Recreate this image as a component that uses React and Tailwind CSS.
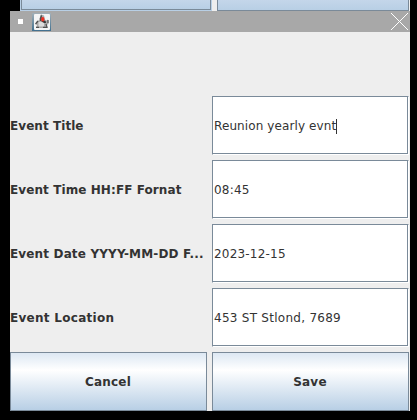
const textBase = "font-['DejaVu_Sans',sans-serif] text-[12px] leading-[14px] text-[#333333] whitespace-pre";

const fields = [
  { label: "Event Title", value: "Reunion yearly evnt", caret: true, labelTrack: "tracking-[0.06px]", valueTrack: "tracking-[0.1px]" },
  { label: "Event Time HH:FF Fornat", value: "08:45", labelTrack: "tracking-[0.09px]", valueTrack: "tracking-[0.2px]" },
  { label: "Event Date YYYY-MM-DD F...", value: "2023-12-15", labelTrack: "tracking-[0.15px]", valueTrack: "tracking-[0.2px]" },
  { label: "Event Location", value: "453 ST Stlond, 7689", labelTrack: "tracking-[0.28px]", valueTrack: "tracking-[0.27px]" },
];

function AppIcon() {
  return (
    <svg width="19" height="18" viewBox="0 0 19 18">
      <defs>
        <linearGradient id="frame" x1="0" y1="0" x2="0" y2="1">
          <stop offset="0" stopColor="#a3b0b8" />
          <stop offset="1" stopColor="#41708f" />
        </linearGradient>
      </defs>
      <rect width="19" height="18" fill="url(#frame)" />
      <rect x="2" y="1" width="16" height="16" rx="1" fill="#f4f5f6" />
      <path d="M3.5 11 L5 8 L8 7 L9 1.5 L12 2.5 L13.5 8 L16 6.5 L16.5 11 L14.5 12 L16 15 L4 15 L5 12Z" fill="#a8a8a8" />
      <path d="M7.5 6 L9 1.5 L10 3 L9.5 8 L8 8Z" fill="#505050" />
      <path d="M9 8 L13.5 7.5 L14 10 L10 10Z" fill="#383838" />
      <path d="M6.5 9 L9.5 8.5 L12 10 L12 13.5 L6.5 13.5Z" fill="#dcdcdc" />
      <path d="M3.5 11 L6 8 M16 7 L16 10 M14 11 L15 14 M4 14.3 H7 M11 14.3 H15.5" stroke="#505050" strokeWidth="1.2" fill="none" />
      <ellipse cx="10.8" cy="6.2" rx="1.6" ry="2.3" fill="#ee3022" />
    </svg>
  );
}

function TitleBar() {
  return (
    <div className="flex h-[21px] bg-[#a8a8a8]">
      <div className="mt-2 ml-2 size-[5px] bg-white" />
      <div className="mt-0.5 ml-[9px]">
        <AppIcon />
      </div>
      <svg className="mt-0.5 mr-0.5 ml-auto" width="17" height="17" viewBox="0 0 17 17" shapeRendering="crispEdges">
        <path d="M0 0 L17 17 M17 0 L0 17" stroke="#fff" strokeWidth="1" />
      </svg>
    </div>
  );
}

function Field({ value, caret, track }) {
  return (
    <div className="flex bg-white border border-[#7a8a99] border-r-white border-b-white">
      <div className={`flex flex-1 items-center border-r border-b border-[#7a8a99] pt-0.5 pl-px ${textBase} ${track}`}>
        {value}
        {caret && <span className="h-[15px] w-px bg-[#333333]" />}
      </div>
    </div>
  );
}

function Button({ children }) {
  return (
    <button
      className={`border border-[#7a8a99] bg-linear-to-b from-[#dde8f3] via-white via-30% to-[#b8cfe5] pr-px font-bold tracking-[0.2px] ${textBase}`}
    >
      {children}
    </button>
  );
}

export default function App() {
  return (
    <div className="h-[420px] w-[417px] overflow-hidden bg-black">
      <div className="ml-5 flex h-[11px] w-[390px] bg-[#eeeeee]">
        <div className="w-[192px] border-x border-b border-[#b8cfe5] bg-[#7a8a99]">
          <div className="h-[10px] border-x border-b border-[#7a8a99] bg-linear-to-b from-[#c4d6ea] to-[#b8cfe5]" />
        </div>
        <div className="ml-[5px] w-[192px] border-x border-b border-[#7a8a99] bg-linear-to-b from-[#c4d6ea] to-[#b8cfe5]" />
      </div>
      <div className="ml-2.5 w-[400px] bg-[#eeeeee]">
        <TitleBar />
        <div className="grid h-[379px] grid-cols-[197px_197px] grid-rows-[repeat(6,59px)] gap-[5px]">
          <div className="col-span-2" />
          {fields.map((f) => (
            <div key={f.label} className="contents">
              <div className={`flex items-center font-bold ${textBase} ${f.labelTrack}`}>{f.label}</div>
              <Field value={f.value} caret={f.caret} track={f.valueTrack} />
            </div>
          ))}
          <Button>Cancel</Button>
          <Button>Save</Button>
        </div>
      </div>
    </div>
  );
}
